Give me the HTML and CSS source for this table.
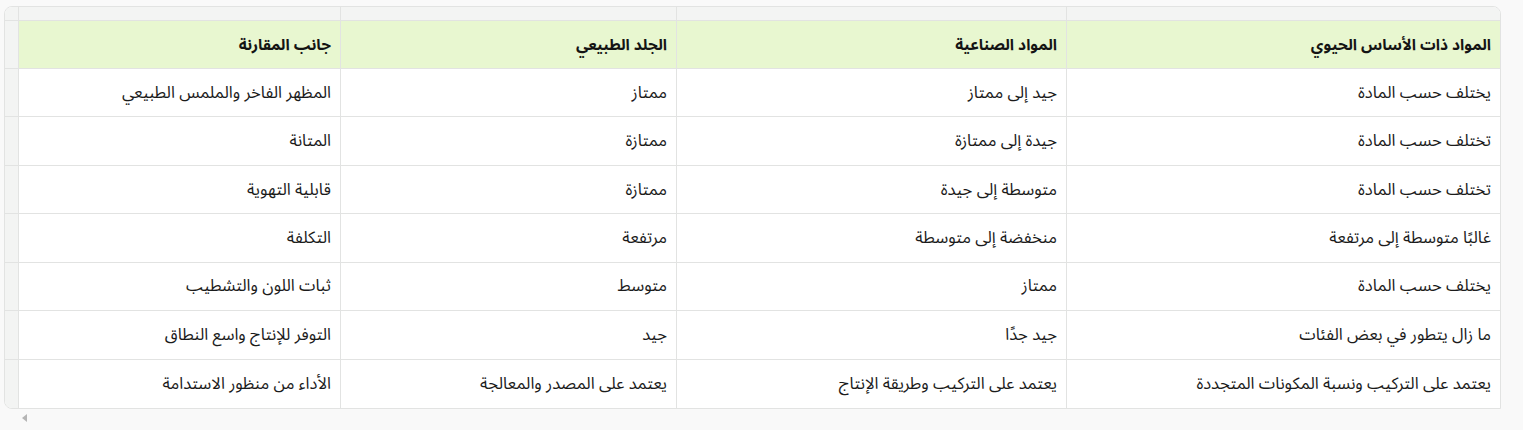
FILE: index.html
```html
<!DOCTYPE html>
<html lang="ar">
<head>
<meta charset="utf-8">
<link rel="stylesheet" href="styles.css">
</head>
<body>
<div class="wrap">
  <div class="sheet" dir="rtl">
    <div class="band"></div><div class="band"></div><div class="band"></div><div class="band"></div><div class="band corner"></div>

    <div class="cell head">المواد ذات الأساس الحيوي</div>
    <div class="cell head">المواد الصناعية</div>
    <div class="cell head">الجلد الطبيعي</div>
    <div class="cell head">جانب المقارنة</div>
    <div class="gut"></div>

    <div class="cell">يختلف حسب المادة</div>
    <div class="cell">جيد إلى ممتاز</div>
    <div class="cell">ممتاز</div>
    <div class="cell">المظهر الفاخر والملمس الطبيعي</div>
    <div class="gut"></div>

    <div class="cell">تختلف حسب المادة</div>
    <div class="cell">جيدة إلى ممتازة</div>
    <div class="cell">ممتازة</div>
    <div class="cell">المتانة</div>
    <div class="gut"></div>

    <div class="cell">تختلف حسب المادة</div>
    <div class="cell">متوسطة إلى جيدة</div>
    <div class="cell">ممتازة</div>
    <div class="cell">قابلية التهوية</div>
    <div class="gut"></div>

    <div class="cell">غالبًا متوسطة إلى مرتفعة</div>
    <div class="cell">منخفضة إلى متوسطة</div>
    <div class="cell">مرتفعة</div>
    <div class="cell">التكلفة</div>
    <div class="gut"></div>

    <div class="cell">يختلف حسب المادة</div>
    <div class="cell">ممتاز</div>
    <div class="cell">متوسط</div>
    <div class="cell">ثبات اللون والتشطيب</div>
    <div class="gut"></div>

    <div class="cell">ما زال يتطور في بعض الفئات</div>
    <div class="cell">جيد جدًا</div>
    <div class="cell">جيد</div>
    <div class="cell">التوفر للإنتاج واسع النطاق</div>
    <div class="gut"></div>

    <div class="cell last">يعتمد على التركيب ونسبة المكونات المتجددة</div>
    <div class="cell last">يعتمد على التركيب وطريقة الإنتاج</div>
    <div class="cell last">يعتمد على المصدر والمعالجة</div>
    <div class="cell last">الأداء من منظور الاستدامة</div>
    <div class="gut last"></div>
  </div>
  <div class="scroll"><span class="arrow"></span></div>
</div>
</body>
</html>
```

FILE: styles.css
```css
html, body {
  margin: 0;
  padding: 0;
  background: #f9f9f9;
}
body {
  font-family: "Noto Sans Arabic", "DejaVu Sans", sans-serif;
  font-size: 16.6px;
  color: #1b1b1b;
}
.wrap {
  padding: 6px 0 0 4px;
  width: 1497px;
}
.sheet {
  display: grid;
  grid-template-columns: 434px 390px 336px 322px 14px;
  grid-template-rows: 14px 48px repeat(7, 48.43px);
  border: 1px solid #e2e3e2;
  border-radius: 8px 8px 0 8px;
  overflow: hidden;
  background: #fff;
  box-sizing: border-box;
  width: 1497px;
}
.band {
  background: #f3f4f3;
  border-bottom: 1px solid #e2e3e2;
  border-left: 1px solid #e2e3e2;
}
.band.corner { border-left: none; }
.gut {
  background: #f3f4f3;
  border-bottom: 1px solid #e2e3e2;
}
.cell {
  display: flex;
  align-items: center;
  padding: 0 9px;
  line-height: 20px;
  border-left: 1px solid #e2e3e2;
  border-bottom: 1px solid #e2e3e2;
  background: #fff;
  white-space: nowrap;
}
.cell.head {
  background: #e8f7d0;
  font-weight: bold;
  font-size: 15.5px;
  color: #141414;
}
.last { border-bottom: none; }
.scroll {
  height: 22px;
  position: relative;
}
.arrow {
  position: absolute;
  left: 18px;
  top: 5px;
  width: 0;
  height: 0;
  border-top: 4px solid transparent;
  border-bottom: 4px solid transparent;
  border-right: 5px solid #b5b5b5;
}
```
